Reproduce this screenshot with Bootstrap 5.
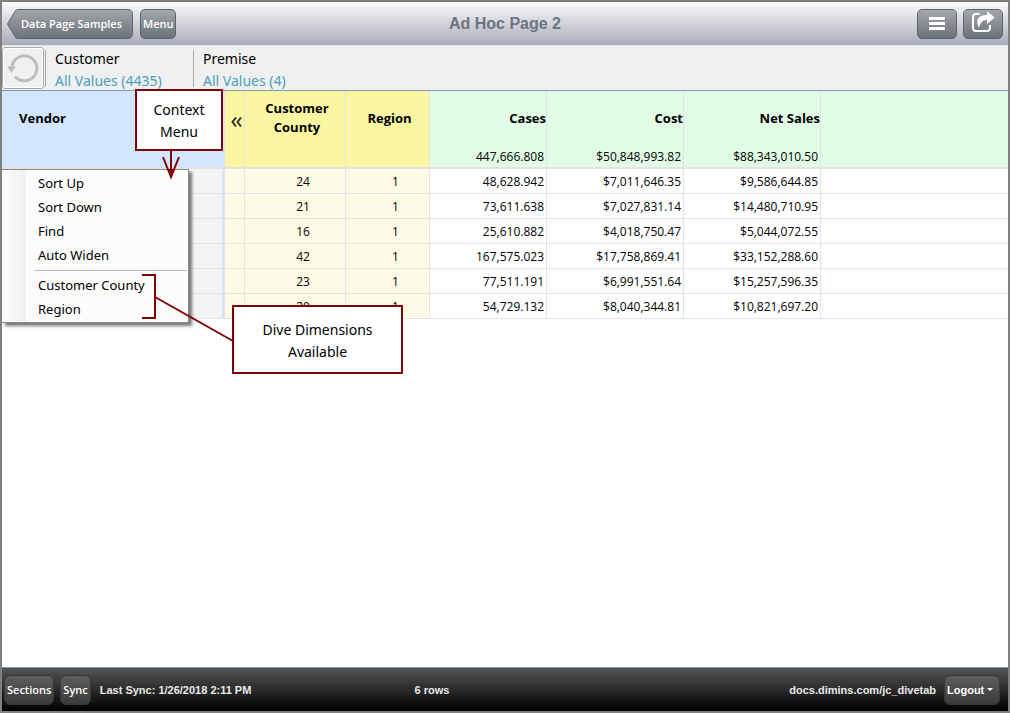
<!DOCTYPE html>
<html lang="en">
<head>
<meta charset="utf-8">
<meta name="viewport" content="width=device-width, initial-scale=1">
<title>Ad Hoc Page 2</title>
<link href="https://cdn.jsdelivr.net/npm/bootstrap@5.3.0/dist/css/bootstrap.min.css" rel="stylesheet">
<style>
  body { font-family: "Open Sans", "Noto Sans", sans-serif; color: #000; background: #fff; }
  .app-frame { border: 2px solid #808080; }
  .app-header { height: 43px; padding: 0 5px; background: linear-gradient(#fbfbfd, #a9abb8); }
  .app-title { font: bold 16px/20px "Liberation Sans", Arial, sans-serif; color: #6c757f; }
  .tool-btn { height: 30px; border: 1px solid #5b636d; border-radius: 5px; padding: 0 2px; color: #fff;
    background: linear-gradient(#a4a8ac, #6a717a); font-size: 11px; line-height: 16px; font-weight: 600; }
  .tool-btn.wide { width: 40px; }
  .menu-btn { width: 36px; margin-left: 7px; }
  .share-btn, .sync-btn { margin-left: 6px; }
  .back-btn { width: 126px; height: 30px; border: 0; background: none; padding: 0 0 0 14px; }
  .back-btn svg { position: absolute; inset: 0; width: 100%; height: 100%; }
  .back-btn span { position: relative; }
  .filter-bar { height: 46px; background: #efefef; border-top: 1px solid #e2e2e2; border-bottom: 1px solid #7f99bd; font-family: "Noto Sans", sans-serif; font-size: 14px; line-height: 22px; }
  .undo-btn { width: 42px; height: 42px; border: 1px solid #a8a8a8; outline: 1px solid #fff; outline-offset: -2px; background: #f0f0f0; border-radius: 3px; padding: 0; margin: 1px 1px 0 0; }
  .filter-item { border-left: 1px solid #a9a9a9; height: 37px; padding-left: 9px; min-width: 148px; }
  .filter-item > * { display: block; }
  .filter-item a { color: #4a9fbd; }
  .filter-label { margin-top: -2px; }
  .data-grid { table-layout: fixed; width: 100%; border-collapse: separate; border-spacing: 0; font-size: 12px; line-height: 16px; }
  .data-grid th, .data-grid td { border-right: 1px solid #e3e3e3; border-bottom: 1px solid #e3e3e3; padding: 2px 2px 0 0; height: 25px; text-align: right; }
  .data-grid thead th { height: 78px; border-bottom-width: 2px; background: #e2fde6; font-size: 13px; line-height: 19px; vertical-align: top; padding: 0; }
  .data-grid th:last-child, .data-grid td:last-child { border-right: 0; }
  .data-grid thead .dim { background: #faf6a2; text-align: center; padding-left: 4px; }
  .data-grid tbody .dim { background: #fdfae6; text-align: center; padding-left: 18px; }
  .data-grid thead .vendor { background: #d2e7ff; text-align: left; padding-left: 17px; }
  .data-grid tbody .vendor { background: #f4f4f4; box-shadow: inset -2px 0 #d5e7f2; }
  .head-label { display: flex; flex-direction: column; justify-content: center; height: 54px; }
  .head-total { display: block; font-size: 12px; line-height: 24px; margin-bottom: -2px; font-weight: 400; padding-right: 2px; }
  .data-grid .collapse-cell { padding-left: 2px; }
  .collapse-btn { border: 0; background: none; padding: 0; width: 100%; height: 60px; }
  .grid-area { min-height: calc(100vh - 137px); }
  .context-menu { position: absolute; left: 0; top: 78px; width: 187px; height: 154px; padding: 1px 0; border: 1px solid #8a8a8a; border-left: 0;
    background: linear-gradient(90deg, #fcfcfc, #f0f0f0 24px, #fcfcfc 24px); box-shadow: 3px 3px 3px #777; font-family: "Noto Sans", sans-serif; font-size: 13px; line-height: 24px; }
  .context-menu button { display: block; width: 100%; height: 24px; border: 0; background: none; padding: 0 0 0 36px; text-align: left; }
  .context-menu hr { margin: 3px 1px 2px 32px; border-top: 1px solid #b8b8b8; opacity: 1; }
  .callout { position: absolute; border: 2px solid #800008; background: #fff; text-align: center; font-family: "Noto Sans", sans-serif; font-size: 14px; line-height: 22px; }
  .callout-menu { left: 133px; top: -2px; width: 88px; height: 62px; padding-top: 8px; }
  .callout-dive { left: 230px; top: 214px; width: 171px; height: 69px; padding-top: 12px; }
  .callout-lines { position: absolute; left: 0; top: 0; width: 240px; height: 260px; pointer-events: none; }
  .app-footer { height: 44px; border-top: 1px solid #8197bd; padding: 0 8px 0 2px; background: linear-gradient(#555, #000); color: #e8e8e8;
    font: bold 11px/16px "Liberation Sans", Arial, sans-serif; }
  .foot-btn { height: 30px; border: 1px solid #383838; border-radius: 6px; padding: 0 2px; color: #fff; background: linear-gradient(#5e5e5e, #3a3a3a);
    font: 600 11px/16px "Open Sans", sans-serif; }
  .foot-btn.logout { font: bold 11px/16px "Liberation Sans", Arial, sans-serif; width: 56px; }
  .sync-time { margin-left: 9px; }
  .row-count { left: 41%; }
</style>
</head>
<body>
<div class="app-frame min-vh-100 d-flex flex-column">
  <header class="app-header d-flex align-items-center position-relative">
    <button class="tool-btn back-btn position-relative text-start" type="button">
      <svg viewBox="0 0 126 30" aria-hidden="true"><defs><linearGradient id="steel" x1="0" y1="0" x2="0" y2="1"><stop stop-color="#a4a8ac"/><stop offset="1" stop-color="#6a717a"/></linearGradient></defs>
        <path d="M11 .5H120.500q5 0 5 5v19q0 5-5 5H11q-2 0-3-2L.5 15 8 2.500q1-2 3-2z" fill="url(#steel)" stroke="#5b636d"/></svg>
      <span>Data Page Samples</span>
    </button>
    <button class="tool-btn menu-btn" type="button">Menu</button>
    <h1 class="app-title position-absolute start-50 translate-middle-x m-0">Ad Hoc Page 2</h1>
    <button class="tool-btn wide ms-auto d-flex align-items-center justify-content-center" type="button" aria-label="Options">
      <svg width="16" height="13" viewBox="0 0 16 13" fill="#fff"><path d="M0 0h16v3H0zM0 5h16v3H0zM0 10h16v3H0z"/></svg>
    </button>
    <button class="tool-btn wide share-btn d-flex align-items-start justify-content-center" type="button" aria-label="Share">
      <svg width="24" height="23" viewBox="0 0 24 23"><path d="M8.500 4H5Q2 4 2 7v11q0 3 3 3h11q3 0 3-3v-3" fill="none" stroke="#fff" stroke-width="2"/><path d="M16 1l7.500 6.500L16 14v-4Q9.500 9.500 8 18 2 5.500 16 5z" fill="#fff"/></svg>
    </button>
  </header>

  <section class="filter-bar d-flex">
    <button class="undo-btn d-flex align-items-center justify-content-center" type="button" aria-label="Reset filters">
      <svg width="34" height="34" viewBox="0 0 34 34"><path d="M6 16A12.500 12.500 0 1 1 9 25.500" fill="none" stroke="#bdbdbd" stroke-width="3"/><path d="M1 15.500h9l-4.500 6.500z" fill="#bdbdbd"/></svg>
    </button>
    <div class="filter-item mt-1"><span class="filter-label">Customer</span><a class="text-decoration-none" href="#">All Values (4435)</a></div>
    <div class="filter-item mt-1"><span class="filter-label">Premise</span><a class="text-decoration-none" href="#">All Values (4)</a></div>
  </section>

  <main class="grid-area position-relative flex-grow-1">
    <table class="data-grid">
      <colgroup><col style="width:223px"><col style="width:20px"><col style="width:101px"><col style="width:84px"><col style="width:117px"><col style="width:137px"><col style="width:137px"><col></colgroup>
      <thead><tr>
        <th class="vendor"><span class="head-label">Vendor</span></th>
        <th class="dim collapse-cell"><button class="collapse-btn" type="button" aria-label="Collapse columns"><svg width="11" height="10" viewBox="0 0 11 10" fill="none" stroke="#333" stroke-width="2"><path d="M5 .5 1.500 5 5 9.500M10 .5 6.500 5l3.500 4.500"/></svg></button></th>
        <th class="dim"><span class="head-label">Customer<br>County</span></th>
        <th class="dim"><span class="head-label">Region</span></th>
        <th><span class="head-label">Cases</span><span class="head-total">447,666.808</span></th>
        <th><span class="head-label">Cost</span><span class="head-total">$50,848,993.82</span></th>
        <th><span class="head-label">Net Sales</span><span class="head-total">$88,343,010.50</span></th>
        <th></th>
      </tr></thead>
      <tbody>
        <tr><td class="vendor"></td><td class="dim"></td><td class="dim">24</td><td class="dim">1</td><td>48,628.942</td><td>$7,011,646.35</td><td>$9,586,644.85</td><td></td></tr>
        <tr><td class="vendor"></td><td class="dim"></td><td class="dim">21</td><td class="dim">1</td><td>73,611.638</td><td>$7,027,831.14</td><td>$14,480,710.95</td><td></td></tr>
        <tr><td class="vendor"></td><td class="dim"></td><td class="dim">16</td><td class="dim">1</td><td>25,610.882</td><td>$4,018,750.47</td><td>$5,044,072.55</td><td></td></tr>
        <tr><td class="vendor"></td><td class="dim"></td><td class="dim">42</td><td class="dim">1</td><td>167,575.023</td><td>$17,758,869.41</td><td>$33,152,288.60</td><td></td></tr>
        <tr><td class="vendor"></td><td class="dim"></td><td class="dim">23</td><td class="dim">1</td><td>77,511.191</td><td>$6,991,551.64</td><td>$15,257,596.35</td><td></td></tr>
        <tr><td class="vendor"></td><td class="dim"></td><td class="dim">20</td><td class="dim">1</td><td>54,729.132</td><td>$8,040,344.81</td><td>$10,821,697.20</td><td></td></tr>
      </tbody>
    </table>

    <div class="context-menu">
      <button type="button">Sort Up</button>
      <button type="button">Sort Down</button>
      <button type="button">Find</button>
      <button type="button">Auto Widen</button>
      <hr>
      <button type="button">Customer County</button>
      <button type="button">Region</button>
    </div>

    <svg class="callout-lines" viewBox="0 0 240 260" fill="none" stroke="#800008" stroke-width="2" aria-hidden="true">
      <path d="M169 60v22M161 66l8 20 8-20M140 184h13v43h-13M153 206l78 44"/><path d="M165.500 78h7l-3.500 9z" fill="#800008" stroke="none"/>
    </svg>
    <div class="callout callout-menu">Context<br>Menu</div>
    <div class="callout callout-dive">Dive Dimensions<br>Available</div>
  </main>

  <footer class="app-footer d-flex align-items-center position-relative">
    <button class="foot-btn" type="button">Sections</button>
    <button class="foot-btn sync-btn" type="button">Sync</button>
    <span class="sync-time">Last Sync: 1/26/2018 2:11 PM</span>
    <span class="position-absolute row-count">6 rows</span>
    <span class="ms-auto me-2">docs.dimins.com/jc_divetab</span>
    <button class="foot-btn logout d-flex align-items-center justify-content-between" type="button">Logout <svg width="6" height="3" viewBox="0 0 6 3" class="me-1"><path d="M0 0h6L3 3z" fill="#fff"/></svg></button>
  </footer>
</div>
<script src="https://cdn.jsdelivr.net/npm/bootstrap@5.3.0/dist/js/bootstrap.bundle.min.js"></script>
</body>
</html>
